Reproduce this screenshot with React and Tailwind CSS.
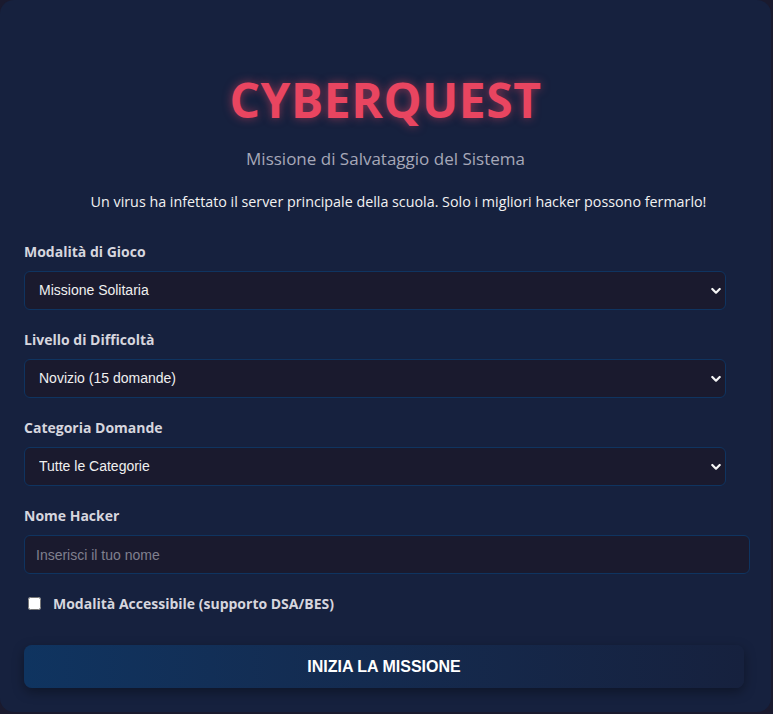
import React from "react";

const SEGOE = "font-['Open_Sans','Noto_Sans',sans-serif]";
const ARIAL = "font-['Liberation_Sans',Arial,sans-serif]";

function Chevron() {
  return (
    <svg
      className="pointer-events-none absolute right-[5px] top-1/2 -translate-y-1/2"
      width="10"
      height="7"
      viewBox="0 0 10 7"
    >
      <path d="M1.3 1.5 L5 5.2 L8.7 1.5" fill="none" stroke="#f4f4f4" strokeWidth="2.2" strokeLinecap="round" strokeLinejoin="round" />
    </svg>
  );
}

function SelectField({ label, value }) {
  return (
    <div className="mb-[20px]">
      <label className={`block mb-[9px] text-[14px] leading-[20px] font-bold text-[#d6d6de] ${SEGOE}`}>
        {label}
      </label>
      <div className="relative w-[702px]">
        <select
          defaultValue={value}
          className={`appearance-none w-full h-[39px] pl-[14px] pr-8 rounded-[6px] bg-[#1a1a2e] border border-[#0f3460] text-[14px] text-[#f0f0f0] ${ARIAL}`}
        >
          <option>{value}</option>
        </select>
        <Chevron />
      </div>
    </div>
  );
}

export default function App() {
  return (
    <div className="min-h-[714px] bg-[#1a1a2e]">
      <div className="w-[771px] h-[712px] rounded-[14px] bg-[#16213e] px-[24px] pt-[72px]">
        <h1
          className={`text-center text-[48px] leading-[56px] font-bold text-[#e94560] tracking-[0.5px] ${SEGOE} [text-shadow:0_0_10px_rgba(233,69,96,0.55)]`}
        >
          CYBERQUEST
        </h1>
        <p className={`mt-[20px] text-center text-[17px] leading-[22px] text-[#a6a8b8] ${SEGOE}`}>
          Missione di Salvataggio del Sistema
        </p>
        <p className={`mt-[22px] pl-[26px] text-center text-[14.3px] leading-[20px] text-[#f2f2f2] ${SEGOE}`}>
          Un virus ha infettato il server principale della scuola. Solo i migliori hacker possono fermarlo!
        </p>

        <div className="mt-[30px]">
          <SelectField label="Modalità di Gioco" value="Missione Solitaria" />
          <SelectField label="Livello di Difficoltà" value="Novizio (15 domande)" />
          <SelectField label="Categoria Domande" value="Tutte le Categorie" />

          <div className="mb-[19px]">
            <label className={`block mb-[9px] text-[14px] leading-[20px] font-bold text-[#d6d6de] ${SEGOE}`}>
              Nome Hacker
            </label>
            <input
              type="text"
              placeholder="Inserisci il tuo nome"
              className={`w-[726px] h-[39px] px-[11px] rounded-[6px] bg-[#1a1a2e] border border-[#0f3460] text-[14px] text-[#f0f0f0] placeholder:text-[#80808e] outline-none ${ARIAL}`}
            />
          </div>

          <label className="flex items-center gap-[12px] pl-[4px] h-[20px]">
            <input type="checkbox" className="w-[13px] h-[13px] m-0" />
            <span className={`text-[14px] font-bold text-[#d6d6de] ${SEGOE}`}>
              Modalità Accessibile (supporto DSA/BES)
            </span>
          </label>

          <button
            className={`mt-[32px] w-[720px] h-[43px] rounded-[8px] bg-gradient-to-r from-[#0f3460] to-[#16213e] shadow-[0_4px_12px_rgba(0,0,0,0.35)] text-[16px] font-bold text-white ${ARIAL}`}
          >
            INIZIA LA MISSIONE
          </button>
        </div>
      </div>
    </div>
  );
}
